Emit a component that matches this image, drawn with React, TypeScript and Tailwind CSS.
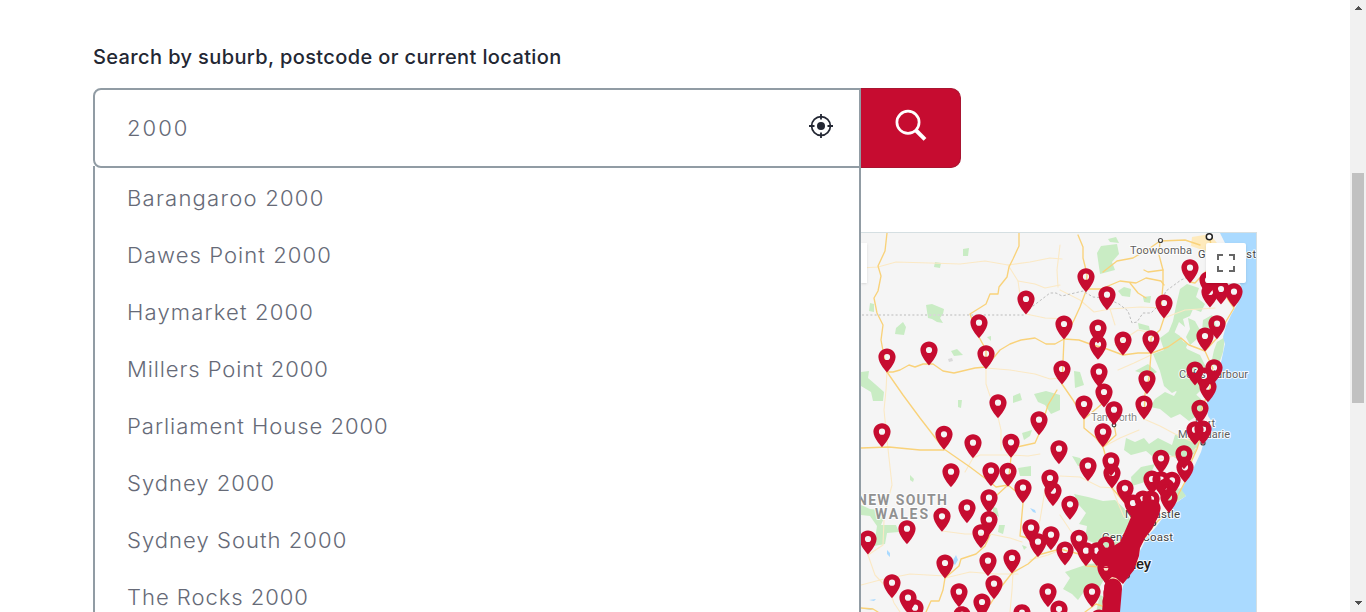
import React from "react";

type Point = [number, number];

const suburbs: { name: string; tracking: string }[] = [
  { name: "Barangaroo 2000", tracking: "tracking-[1.17px]" },
  { name: "Dawes Point 2000", tracking: "tracking-[1px]" },
  { name: "Haymarket 2000", tracking: "tracking-[1.1px]" },
  { name: "Millers Point 2000", tracking: "tracking-[0.85px]" },
  { name: "Parliament House 2000", tracking: "tracking-[0.92px]" },
  { name: "Sydney 2000", tracking: "tracking-[0.95px]" },
  { name: "Sydney South 2000", tracking: "tracking-[0.97px]" },
  { name: "The Rocks 2000", tracking: "tracking-[0.9px]" },
];

// Pin tips, ordered north to south so that southern pins overlap northern ones.
const pins: Point[] = [
  [1190, 282.7], [1086, 291.7], [1208, 295], [1221, 304], [1234, 306.7], [1210, 307],
  [1107, 309.7], [1026, 314], [1164, 318], [979, 337.7], [1217, 338.7], [1064, 339],
  [1098, 343], [1205, 351], [1151, 353.7], [1123, 355], [1098, 359.3], [929, 365],
  [986, 368.7], [887, 372], [1214, 382.7], [1062, 384], [1195, 385], [1099, 386.7],
  [1204, 391], [1147, 393.7], [1208, 401.7], [1104, 407], [998, 417.7], [1084, 419],
  [1144, 419], [1200, 423.3], [1114, 424.7], [1039, 434.7], [1203, 444], [1195, 444.7],
  [882, 446.7], [1103, 446.7], [944, 449.3], [1011, 457.3], [973, 457.7], [1059, 463.7],
  [1184, 468.7], [1161, 473.3], [1111, 475.7], [1088, 480.7], [1185, 482.3], [991, 485.7],
  [1008, 486.3], [951, 486.7], [1112, 488], [1050, 493], [1152, 494], [1161, 494.7],
  [1172, 495.3], [1166, 502], [1023, 502.7], [1125, 503.3], [1053, 505.7], [1169, 512.3],
  [989, 512.7], [1143, 514], [1151, 514], [1133, 518], [1070, 519.3], [967, 522.7],
  [1152, 523], [942, 531.3], [989, 534.5], [1031, 542.7], [907, 543.7], [981, 547.7],
  [1051, 549.7], [1079, 553.3], [868, 554], [1038, 556.7], [1106, 560], [1065, 565],
  [1086, 565.7], [1097, 565.7], [1012, 573], [988, 575.7], [945, 578], [1106, 583],
  [892, 597.7], [994, 598.7], [1113, 602], [959, 606.7], [1048, 606.7], [1092, 606.7],
  [1112, 608], [908, 612.7], [1111, 617], [982, 617], [915, 622.7], [1059, 624],
  [1022, 627.7], [962, 629.7], [1099, 633],
];

const greens: string[] = [
  "963,249 969,248 968,256 963,256", "935,262 941,263 940,268 934,267", "870,303 874,304 874,312 869,311",
  "926,305 932,304 944,309 943,314 940,318 943,323 937,322 932,319 928,318", "896,328 903,322 906,327 904,335 895,334",
  "987,337 991,336 991,341", "951,351 957,349 963,355 954,356", "861,372 869,371 868,378 875,384 884,392 883,401 873,401 871,392 861,386",
  "958,400 962,400 961,408 958,407", "1013,396 1020,393 1022,400 1013,403", "1034,394 1046,391 1060,395 1060,410 1051,414 1045,405 1038,402",
  "1097,253 1101,246 1117,244 1119,254 1112,262 1115,270 1100,274", "1108,239 1116,237 1119,243 1110,242",
  "1118,291 1124,287 1131,289 1130,297 1122,296", "1143,297 1151,296 1150,303 1144,302", "1138,323 1149,326 1150,331 1139,329",
  "1180,289 1187,284 1199,288 1196,297 1205,304 1201,312 1193,309 1190,316 1183,319 1185,327 1179,322 1173,336 1177,343 1171,350 1164,345 1169,331 1173,321 1176,306",
  "1188,318 1195,321 1200,330 1197,339 1190,345 1186,337 1190,329", "1182,341 1188,344 1183,352 1178,350",
  "1203,320 1212,315 1216,326 1209,335 1202,331", "1217,342 1225,337 1223,352 1218,367 1211,364 1214,350",
  "1160,338 1171,330 1180,336 1187,349 1200,355 1206,367 1198,376 1201,390 1193,398 1186,390 1181,396 1176,391 1172,393 1164,386 1160,371 1153,354 1164,350",
  "1135,371 1148,364 1157,372 1150,376", "1155,399 1165,392 1174,396 1179,388 1192,391 1201,399 1203,412 1189,421 1180,414 1171,418 1160,409 1150,407",
  "1074,371 1080,372 1084,385 1075,388", "1022,433 1032,430 1030,436 1024,440", "1018,468 1031,466 1031,476 1020,476",
  "910,475 914,479 913,482 910,480", "861,505 870,509 879,510 884,518 881,525 896,525 899,532 887,533 885,544 874,546 877,526 870,516 861,515",
  "993,507 997,508 999,517 993,514", "999,525 1005,525 1003,534 998,532", "1022,545 1027,547 1024,550",
  "1126,438 1135,442 1144,438 1149,444 1158,438 1172,445 1175,435 1190,433 1199,443 1194,454 1179,460 1172,456 1164,452 1152,456 1146,451 1131,455 1124,450",
  "1131,477 1141,467 1155,464 1150,475 1145,482 1132,486",
  "1182,488 1186,496 1175,503 1166,500 1171,490", "1072,456 1080,458 1085,465 1078,466",
  "1074,494 1088,497 1103,501 1115,500 1126,510 1132,525 1128,540 1111,549 1096,544 1085,539 1087,526 1079,524 1086,513 1079,505",
  "1065,572 1088,564 1101,563 1106,576 1098,590 1088,586 1078,600 1072,594 1063,589 1070,578", "1100,595 1109,599 1112,612 1096,612",
];

const paleRoads: string[] = [
  "861,268 878,267 896,262 930,263 960,264 985,261 1008,265 1030,262 1050,258 1062,259",
  "1008,265 1018,281 1020,295 1026,314 1045,318 1070,319",
  "1018,281 1035,284 1045,288 1060,285", "1060,245 1057,270 1058,287", "887,372 886,390 884,410 886,430 889,458 892,485 888,500 884,520 883,545 868,555",
  "986,368 1010,370 1035,374 1050,379 1060,378", "986,370 986,384 990,396", "998,417 1001,430 1001,450",
  "973,458 980,455 1011,455 1028,456 1040,454", "973,458 965,472", "942,531 965,534 990,534 1010,538 1022,542",
  "861,585 880,580 910,574 945,576", "868,555 875,575 890,591 894,603 900,612", "945,578 970,572 995,574 1018,574",
  "1060,290 1080,300 1094,312 1110,309 1115,325", "1110,309 1140,307 1164,308", "1164,318 1185,310 1215,308",
  "1115,345 1138,330 1158,334", "1103,447 1120,438 1139,430", "1060,476 1080,477 1100,487 1115,488",
  "1060,515 1070,530 1082,545", "1112,488 1118,503 1124,517", "1160,459 1175,456 1188,458 1196,448",
  "1144,419 1160,426 1175,434 1195,443", "1013,573 1012,590 1010,612", "1045,490 1040,520 1036,535",
  "1151,355 1134,363 1118,370", "1060,550 1048,555 1030,560",
];

const yellowRoads: string[] = [
  "887,233 885,251 878,266 881,276 878,291 874,298 877,313 883,325 881,340 887,372",
  "1019,233 1019,246 1013,259 1009,267 1007,277 999,287 998,294 990,294 986,304 970,314 979,337 986,350 986,368",
  "887,372 893,372 900,370 909,365 915,367 923,364 933,364 943,371 954,373 975,368 986,367 1000,350 1010,344 1021,340 1035,338 1046,344 1055,344 1064,339 1079,340 1090,344 1107,349 1123,355 1138,353 1152,353 1168,347 1181,338 1189,345 1205,351",
  "887,372 903,395 920,418 944,449 970,467 990,482 996,487 1008,485 1019,494 1023,503 1020,536 1028,538 1037,552",
  "861,448 889,447 920,450 944,450", "1086,291 1087,274 1083,258 1083,247 1078,235",
  "1086,291 1080,307 1074,320 1064,339 1062,384 1073,400 1084,419 1084,428 1096,438 1103,447 1111,475 1112,488 1125,503",
  "1086,289 1101,289 1120,281 1136,283 1146,278 1161,281 1164,285",
  "1130,283 1138,293 1146,298", "1103,272 1117,261 1133,258 1150,248 1160,241 1185,240 1200,245",
  "1160,241 1159,255 1163,270 1163,285 1161,306 1164,318 1160,330 1151,338 1151,354 1149,378 1145,394 1144,419",
  "1163,270 1148,272 1144,270", "1190,282 1195,283 1210,267 1210,250", "1210,240 1215,262 1224,281 1225,295 1234,308 1225,323 1217,338 1205,351 1213,369 1210,388 1200,413 1202,433 1197,449 1192,460 1186,480 1178,495 1168,511 1154,525 1140,545 1133,570 1119,581 1114,602",
  "1039,434 1035,443 1017,447 1011,457 1008,485 997,495 990,507", "1057,390 1048,405 1039,434",
  "1084,419 1096,409 1104,402", "1114,424 1116,435 1103,447", "945,578 959,566 961,559 976,554 985,546 990,535",
  "945,578 943,590 939,601 931,601 926,612", "1012,573 1001,587 991,603 982,612", "1012,573 1028,564 1038,555 1060,549 1079,554 1086,566 1102,567",
  "861,608 873,609 878,612", "1114,602 1105,607 1096,604 1085,612",
];

function Pin({ at }: { at: Point }) {
  return (
    <path
      transform={`translate(${at[0]} ${at[1] + 0.5})`}
      fillRule="evenodd"
      d="M0-24C-4.9-24-8.6-20.3-8.6-15.5C-8.6-9 0 0 0 0S8.6-9 8.6-15.5C8.6-20.3 4.9-24 0-24ZM0-18.6A3.1 3.1 0 1 1 0-12.4A3.1 3.1 0 1 1 0-18.6Z"
    />
  );
}

function RegionMap() {
  return (
    <svg className="block h-[379px] w-[395px] shrink-0" viewBox="861 233 395 379">
      <rect x="861" y="233" width="395" height="379" fill="#f5f5f5" />
      <g fill="#c9ecc4">
        {greens.map((g) => <polygon key={g} points={g} />)}
      </g>
      <path
        fill="#aadaff"
        d="M1220 233L1225 243L1229 256L1234 270L1241 286L1239 301L1231 315L1226 326L1223 337L1225 344L1220 367L1213 377L1211 390L1207 402L1208 416L1213 423L1205 438L1201 452L1194 467L1188 479L1181 489L1186 496L1176 503L1170 511L1162 519L1156 527L1147 537L1140 551L1138 564L1129 574L1123 586L1120 598L1118 612H1256V233Z"
      />
      <g fill="#aadaff">
        <path d="M1030 508l5 2 1 3-3-1ZM887 550l3 3 0 4-3-3ZM956 555l2 5-3 5-3-3ZM869 600l7-1-2 2ZM865 609l8-1-2 2Z" />
      </g>
      <path d="M1192 237l18-3 10 13-8 19-7-15-14-5Z" fill="#feeabc" />
      <path d="M1106 578l12-2 3 8-8 26-8-3Z" fill="#feeabc" />
      <g fill="none" strokeLinejoin="round" strokeLinecap="round">
        <g stroke="#fbe9c5" strokeWidth="1.1">
          {paleRoads.map((r) => <polyline key={r} points={r} />)}
        </g>
        <g stroke="#f9d27a" strokeWidth="1.35">
          {yellowRoads.map((r) => <polyline key={r} points={r} />)}
        </g>
        <path d="M862 315H1024" stroke="#d8d8d8" strokeWidth="1.8" strokeDasharray="2 2.2" strokeLinecap="butt" />
        <path
          d="M1029 309L1037 303L1050 293L1056 293L1062 296L1083 291L1093 297L1106 298L1119 304L1128 311L1132 323L1137 322L1143 313L1151 313L1160 304L1166 291L1181 280L1190 276"
          stroke="#bdbdbd" strokeWidth="1" strokeDasharray="2.5 2" strokeLinecap="butt"
        />
      </g>
      <path d="M948 359l4-1 1 3-4 1Z" fill="#dadada" />
      <g fill="#fff" stroke="#444" strokeWidth="1.2">
        <circle cx="1160.5" cy="240.5" r="2" />
        <circle cx="1209.3" cy="236.8" r="3" stroke="#222" strokeWidth="1.5" />
        <circle cx="1114" cy="425" r="1.8" />
        <circle cx="1203" cy="443" r="2" />
        <circle cx="1153.5" cy="523.5" r="2.2" />
        <circle cx="1127" cy="575.5" r="2.5" />
      </g>
      <g
        className="font-[Roboto,sans-serif]" fontSize="11" fill="#5f5f5f"
        stroke="#fff" strokeWidth="2" strokeOpacity="0.85" strokeLinejoin="round" paintOrder="stroke"
      >
        <text x="1130" y="254" textLength="62">Toowoomba</text>
        <text x="1198" y="258" textLength="58" fill="#444">Gold Coast</text>
        <text x="1179" y="378" textLength="69">Coffs Harbour</text>
        <text x="1091" y="421" textLength="46" fill="#888">Tamworth</text>
        <text x="1195" y="426.5" textLength="20">Port</text>
        <text x="1178" y="438" textLength="52">Macquarie</text>
        <text x="1125" y="518" textLength="55" fontSize="11.5" fill="#444">Newcastle</text>
        <text x="1102" y="541" textLength="71" fontSize="11.5" fill="#444">Central Coast</text>
        <text x="1104" y="569" textLength="47" fontSize="15" fontWeight="500" fill="#222">Sydney</text>
        <g fontSize="14" fontWeight="700" fill="#919191">
          <text x="857" y="505" textLength="90">NEW SOUTH</text>
          <text x="875" y="519" textLength="53">WALES</text>
        </g>
      </g>
      <g fill="#c60c30">
        {pins.map((p) => <Pin key={p.join()} at={p} />)}
        <path d="M1138 503L1144 500L1157 500L1160 508L1159 515L1152 529L1145 538L1140 548L1139 556L1134 570L1123 584L1116 578L1112 577L1105 583L1098 568L1097 553L1101 547L1110 548L1120 542L1125 531L1131 517Z" />
        <path d="M1104 589Q1104 580 1113 580Q1122 580 1122 589L1120 612H1102Z" />
      </g>
      <circle cx="1106" cy="568.5" r="2.3" fill="#fbe3c6" />
      <path d="M1102.8 568q3-2.4 6.4 0" fill="#c60c30" />
    </svg>
  );
}

export default function App() {
  return (
    <div className="flex h-[612px] w-full overflow-hidden bg-white font-[Inter,sans-serif]">
      <main className="min-w-0 flex-1 pl-[93px]">
        <h2 className="h-[88px] pt-[43px] text-[20px] leading-[28px] font-medium whitespace-nowrap text-[#232733]">
          <span className="tracking-[0.38px]">Search by suburb, postcode or current location</span>
        </h2>
        <div className="relative z-10 flex h-20 w-[868px]">
          <div className="flex w-[768px] items-center justify-between rounded-l-lg border-2 border-[#919ca4] bg-white pr-[26px] pl-8">
            <span className="inline-block origin-left scale-x-105 pt-0.5 text-[21px] font-[350] tracking-[1.9px] text-[#666a77]">2000</span>
            <svg className="mb-1 size-6" viewBox="0 0 24 24" fill="none" stroke="#232733">
              <circle cx="12" cy="12" r="9.4" strokeWidth="1.7" />
              <circle cx="12" cy="12" r="4" fill="#232733" stroke="none" />
              <path d="M12 0v5.5M12 18.5V24M0 12h5.5M18.5 12H24" strokeWidth="1.8" />
            </svg>
          </div>
          <button aria-label="Search" className="flex w-[100px] justify-center rounded-r-[10px] border border-l-0 border-[#a91531] bg-[#c60c30]">
            <svg className="mt-5 h-8 w-8" viewBox="0 0 32 32" fill="none" stroke="#fff">
              <circle cx="13" cy="13.3" r="11.1" strokeWidth="2.7" />
              <path d="M20.6 21L30 30.3" strokeWidth="4" />
            </svg>
          </button>
          <ul className="absolute top-[78px] left-0 h-[446px] w-[768px] overflow-hidden border-x-2 border-[#919ca4] pt-1">
            <li className="absolute inset-0 -z-10 bg-white" aria-hidden="true" />
            {suburbs.map((s) => (
              <li key={s.name} className="flex h-[57px] items-center pl-8 text-[21px] font-[350] whitespace-nowrap text-[#666a77]">
                <span className={`inline-block origin-left scale-x-105 ${s.tracking}`}>{s.name}</span>
              </li>
            ))}
          </ul>
        </div>
        <section className="mt-16 flex h-[380px] w-[1164px] justify-end border-t border-r border-[#d5dfe2] bg-[#f5f5f5]">
          <div className="relative">
            <RegionMap />
            <div className="absolute top-2.5 left-0 h-10 w-1.5 bg-white shadow-sm" />
            <button aria-label="Full screen" className="absolute top-2.5 right-2.5 flex size-10 items-center justify-center rounded-xs bg-white shadow-sm">
              <svg className="size-[18px]" viewBox="0 0 18 18" fill="#666">
                <path d="M0 0v6h2V2h4V0ZM16 0h-4v2h4v4h2V0ZM16 16h-4v2h6v-6h-2ZM2 12H0v6h6v-2H2Z" />
              </svg>
            </button>
          </div>
        </section>
      </main>
      <div className="flex w-4 flex-col items-center bg-[#f1f1f1]">
        <svg className="mt-1.5 h-1 w-2" viewBox="0 0 8 4" fill="#505050" shapeRendering="crispEdges"><path d="M0 4L4 0L8 4Z" /></svg>
        <div className="mt-[163px] h-[230px] w-3 bg-[#c1c1c1]" />
        <svg className="mt-auto mb-[7px] h-1 w-2" viewBox="0 0 8 4" fill="#505050" shapeRendering="crispEdges"><path d="M0 0L4 4L8 0Z" /></svg>
      </div>
    </div>
  );
}
